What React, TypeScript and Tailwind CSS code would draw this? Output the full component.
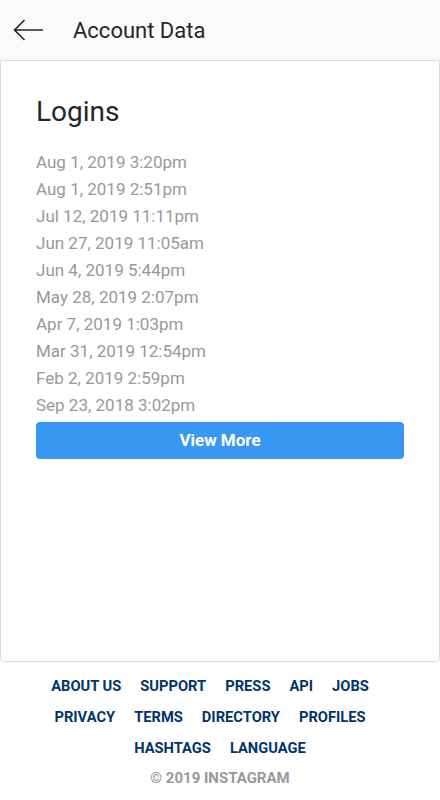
const logins = [
  "Aug 1, 2019 3:20pm",
  "Aug 1, 2019 2:51pm",
  "Jul 12, 2019 11:11pm",
  "Jun 27, 2019 11:05am",
  "Jun 4, 2019 5:44pm",
  "May 28, 2019 2:07pm",
  "Apr 7, 2019 1:03pm",
  "Mar 31, 2019 12:54pm",
  "Feb 2, 2019 2:59pm",
  "Sep 23, 2018 3:02pm",
];

const footerRows = [
  ["About us", "Support", "Press", "API", "Jobs"],
  ["Privacy", "Terms", "Directory", "Profiles"],
  ["Hashtags", "Language"],
];

export default function App() {
  return (
    <div className="min-h-[800px] w-[440px] bg-white font-['Roboto',sans-serif]">
      <header className="flex h-[60px] items-center bg-[#fafafa]">
        <button className="ml-[13px] flex h-[32px] w-[32px] items-center text-[#262626]">
          <svg width="31" height="22" viewBox="0 0 31 22" fill="none" stroke="currentColor" strokeWidth={1.6}>
            <path d="M30 11H1.5M11.5 1L1.5 11l10 10" />
          </svg>
        </button>
        <h1 className="ml-[28px] text-[22px] text-[#262626]">Account Data</h1>
      </header>

      <main className="flex h-[602px] flex-col rounded-b-[4px] border border-[#dbdbdb] px-[35px] pt-[31px]">
        <h2 className="text-[28px] leading-[40px] text-[#262626]">Logins</h2>
        <ul className="mt-[17px] flex flex-col">
          {logins.map((login) => (
            <li key={login} className="text-[17px] leading-[27px] text-[#999999]">
              {login}
            </li>
          ))}
        </ul>
        <button className="mt-[3px] h-[37px] w-full rounded-[4px] bg-[#3897f0] text-[17px] font-bold text-white">
          View More
        </button>
      </main>

      <footer className="flex flex-col items-center pt-[9px]">
        {footerRows.map((row, i) => (
          <nav key={i} className={i < 2 ? "flex h-[31px] items-center gap-[19px] pr-[20px]" : "flex h-[31px] items-center gap-[19px]"}>
            {row.map((item) => (
              <a key={item} href="#" className="text-[14.7px] font-bold uppercase text-[#003569]">
                {item}
              </a>
            ))}
          </nav>
        ))}
        <p className="mt-[3px] text-[15px] font-bold uppercase text-[#999999]">© 2019 Instagram</p>
      </footer>
    </div>
  );
}
